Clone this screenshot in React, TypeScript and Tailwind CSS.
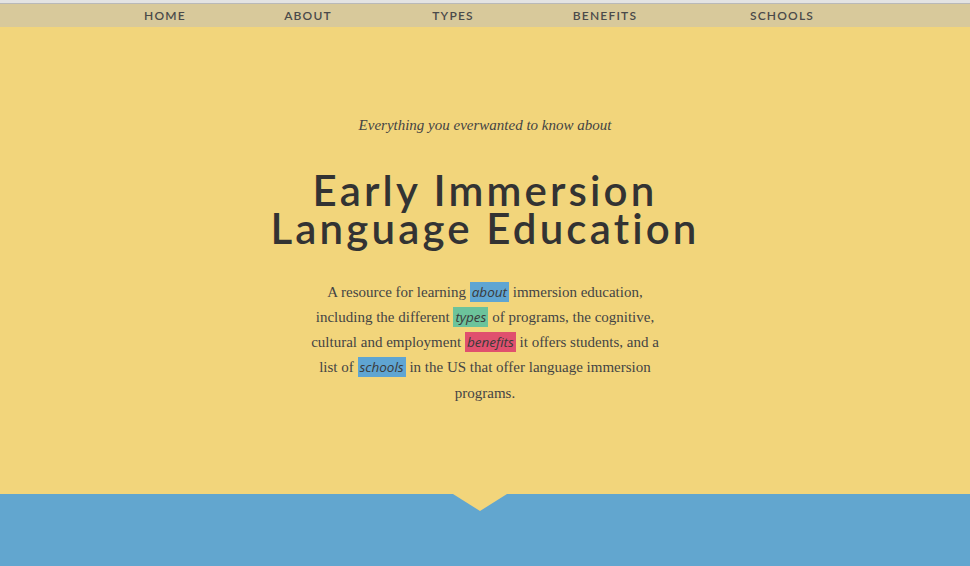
import React from 'react'

const serif = { fontFamily: '"Liberation Serif", "DejaVu Serif", serif' }

const Mark: React.FC<{ color: string; children: React.ReactNode }> = ({ color, children }) => (
  <span className={`${color} px-[2px] py-[1px] italic text-[13.5px] text-[#3a3a3a] font-['Open_Sans',sans-serif]`}>{children}</span>
)

const App: React.FC = () => {
  return (
    <div className="w-full h-[566px] overflow-hidden bg-[#62a6cf]">
      <div className="h-[4px] bg-[#e3e3e3] border-b border-[#b9b9b9]" />
      <nav className="h-[23px] bg-[#d8c99b] flex items-center pl-[94px] text-[12px] tracking-[0.1em] text-[#4a4a4a] font-['Lato',sans-serif] font-semibold">
        <a className="w-[142px] text-center">HOME</a>
        <a className="w-[144px] text-center">ABOUT</a>
        <a className="w-[146px] text-center">TYPES</a>
        <a className="w-[158px] text-center">BENEFITS</a>
        <a className="w-[196px] text-center">SCHOOLS</a>
      </nav>
      <section className="relative h-[467px] bg-[#f2d57b] flex flex-col items-center text-[#3a3a3a]">
        <p className="mt-[87px] text-[15px] italic text-[#444]" style={serif}>
          Everything you everwanted to know about
        </p>
        <h1 className="mt-[34px] text-center text-[42px] leading-[38px] tracking-[0.075em] font-semibold font-['Lato',sans-serif] text-[#333]">
          Early Immersion
          <br />
          Language Education
        </h1>
        <p className="mt-[33px] text-center text-[15px] leading-[25.3px] text-[#444]" style={serif}>
          A resource for learning <Mark color="bg-[#5fa5d2]">about</Mark> immersion education,
          <br />
          including the different <Mark color="bg-[#6cc39b]">types</Mark> of programs, the cognitive,
          <br />
          cultural and employment <Mark color="bg-[#e0506e]">benefits</Mark> it offers students, and a
          <br />
          list of <Mark color="bg-[#5fa5d2]">schools</Mark> in the US that offer language immersion
          <br />
          programs.
        </p>
        <svg className="absolute left-[453px] top-[467px]" width="54" height="17" viewBox="0 0 54 17">
          <polygon points="0,0 54,0 27,17" fill="#f2d57b" />
        </svg>
      </section>
    </div>
  )
}

export default App
